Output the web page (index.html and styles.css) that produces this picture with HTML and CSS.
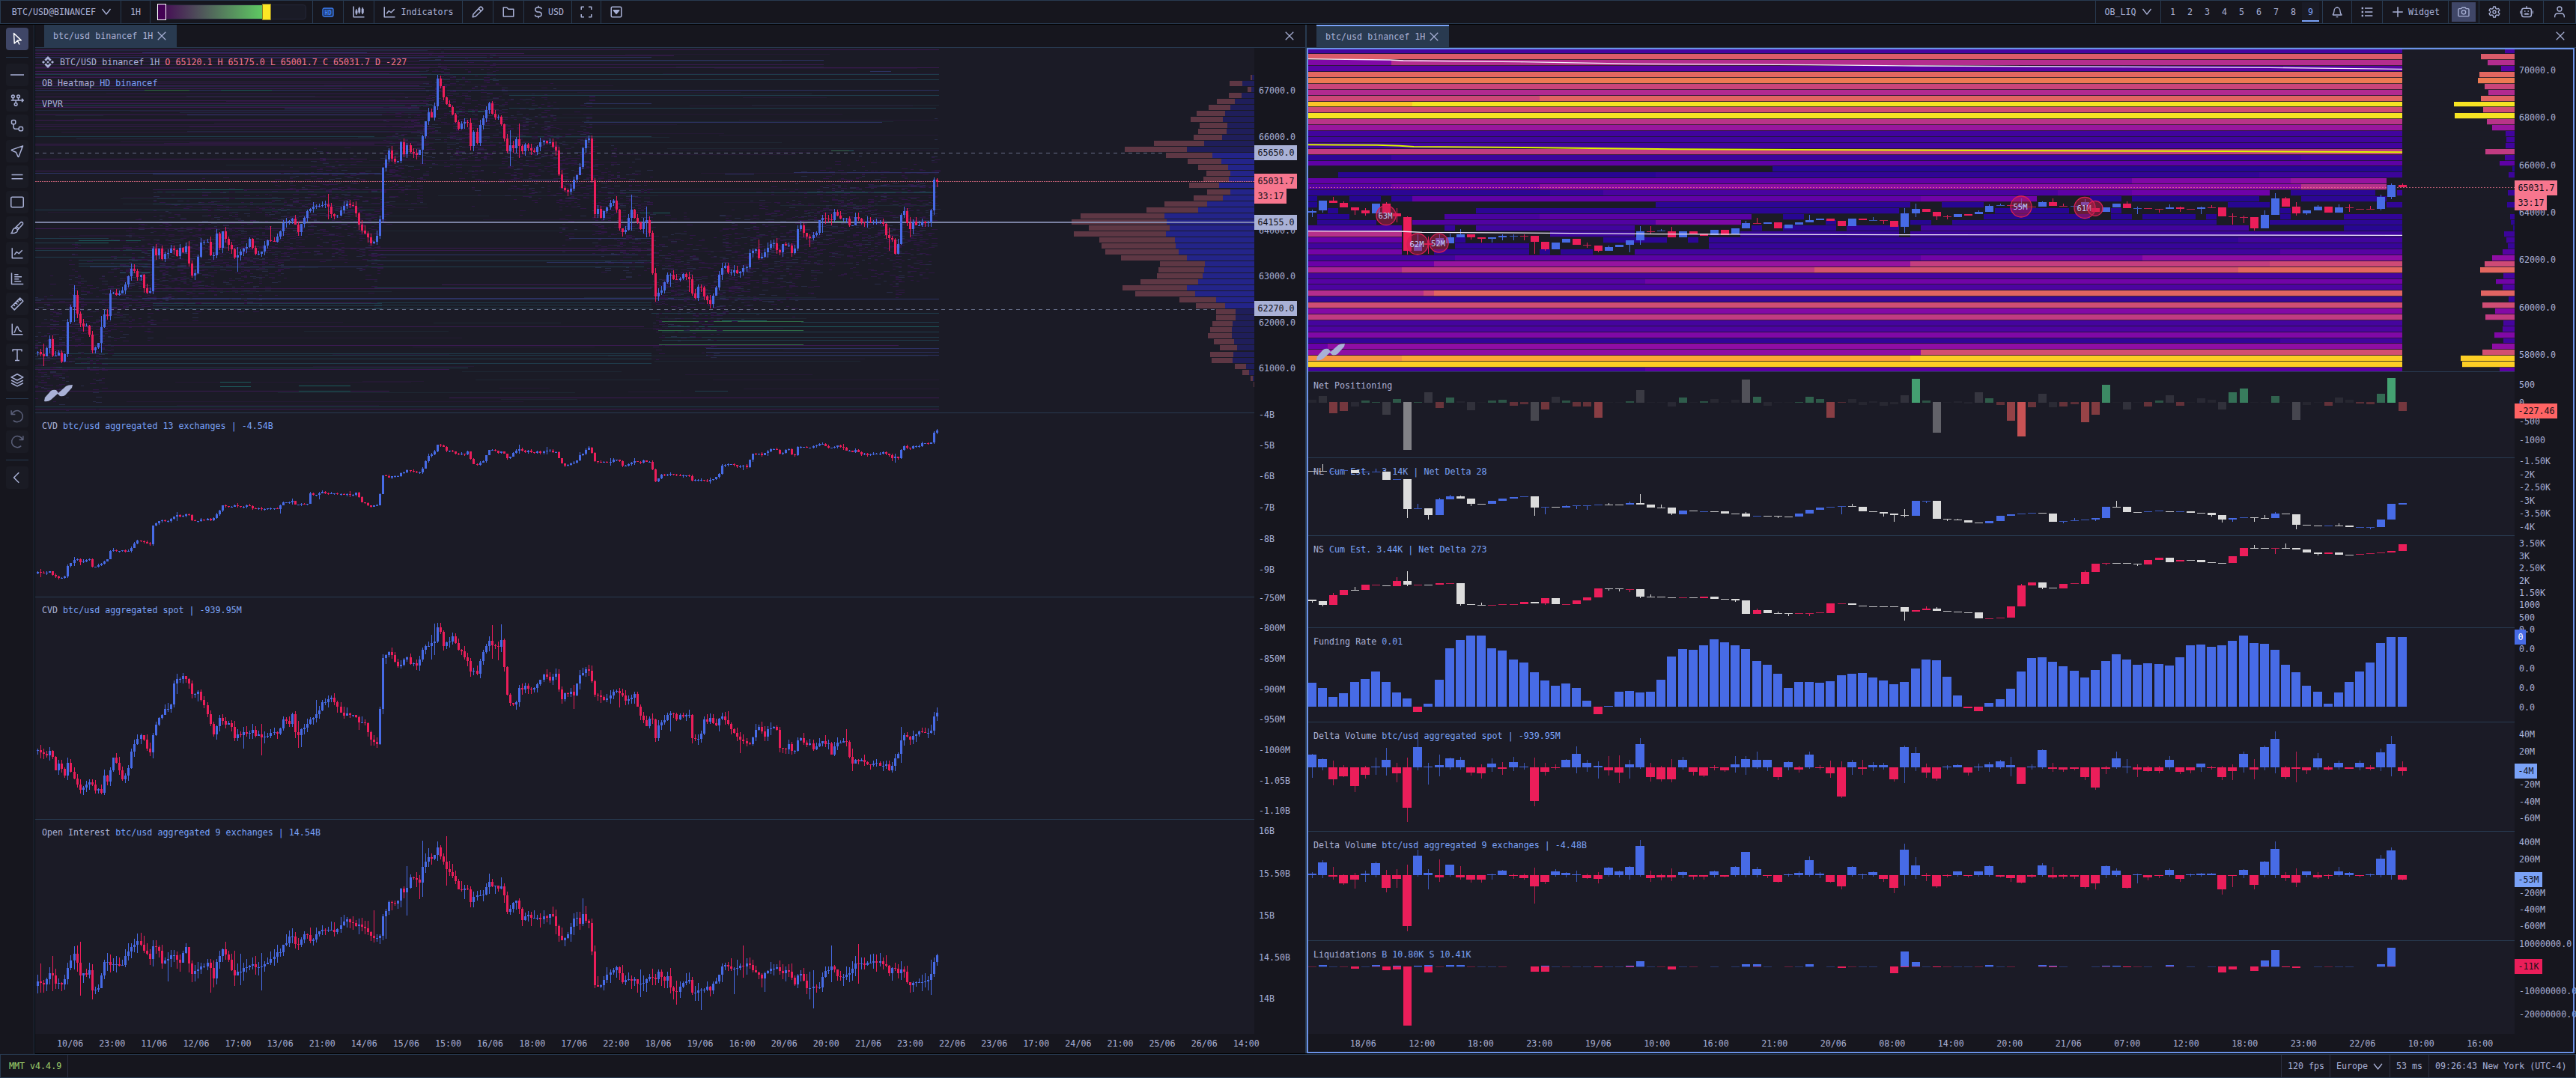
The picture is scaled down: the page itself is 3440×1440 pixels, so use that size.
FILE: index.html
```html
<!DOCTYPE html>
<html lang="en">
<head>
    <meta charset="utf-8">
    <title>MMT - BTC/USD</title>
    <link rel="stylesheet" href="styles.css">
</head>
<body>
    <svg class="sprite" width="0" height="0">
        <symbol id="i-down" viewBox="0 0 24 24"><path d="M1 4l11 14L23 4"/></symbol>
        <symbol id="i-left" viewBox="0 0 24 24"><path d="M15 3l-9 9 9 9"/></symbol>
        <symbol id="i-x" viewBox="0 0 24 24"><path d="M3 3l18 18M21 3L3 21"/></symbol>
        <symbol id="i-plus" viewBox="0 0 24 24"><path d="M12 3v18M3 12h18"/></symbol>
        <symbol id="i-candles" viewBox="0 0 24 24"><path d="M3 2v19h19M8 7v10M7 10h2v4H7zM13 3v12M12 6h2v6h-2zM19 4v12M18 7h2v6h-2z"/></symbol>
        <symbol id="i-chart" viewBox="0 0 24 24"><path d="M3 3v18h19M7 15l4-5 4 3 6-6"/></symbol>
        <symbol id="i-pencil" viewBox="0 0 24 24"><path d="M3 21l1-5L16 3.500a2.200 2.200 0 0 1 3 0l1.500 1.500a2.200 2.200 0 0 1 0 3L8 20zM13.500 6l4.500 4.500"/></symbol>
        <symbol id="i-folder" viewBox="0 0 24 24"><path d="M3 4h6l3 3h9v13H3z"/></symbol>
        <symbol id="i-dollar" viewBox="0 0 24 24"><path d="M17.500 7c0-2-2-3-4-3h-3C8 4 6.500 5.500 6.500 8s2 3.500 4 4h3c2.500.500 4 1.500 4 4s-2 4-4.500 4h-3c-2 0-4-1-4-3M12 1v3M12 20v3"/></symbol>
        <symbol id="i-full" viewBox="0 0 24 24"><path d="M3 8V3h5M16 3h5v5M21 16v5h-5M8 21H3v-5"/></symbol>
        <symbol id="i-box" viewBox="0 0 24 24"><rect x="3" y="3" width="18" height="18" rx="2"/><path d="M7 9h10l-5 6z" fill="currentColor"/></symbol>
        <symbol id="i-bell" viewBox="0 0 24 24"><path d="M3 18h18c-2-2-3-4-3-8a6 7 0 0 0-12 0c0 4-1 6-3 8M10 22h4M12 3V1.500"/></symbol>
        <symbol id="i-list" viewBox="0 0 24 24"><path d="M7.500 4.500H23M7.500 12H23M7.500 19.500H23"/><path d="M1 4.500h3.500M1 12h3.500M1 19.500h3.500" stroke-width="3.500"/></symbol>
        <symbol id="i-camera" viewBox="0 0 24 24"><path d="M3 5.500h4L9 3h6l2 2.500h4a1.500 1.500 0 0 1 1.500 1.500v12a1.500 1.500 0 0 1-1.500 1.500H3A1.500 1.500 0 0 1 1.500 19V7A1.500 1.500 0 0 1 3 5.500z"/><circle cx="12" cy="12.500" r="4"/></symbol>
        <symbol id="i-gear" viewBox="0 0 24 24"><path d="M10 1.500h4l.800 3.500 2.200 1.200 3.500-1 2 3.500-2.500 2.300v2l2.500 2.300-2 3.500-3.500-1L14.800 19l-.800 3.500h-4L9.200 19 7 17.800l-3.500 1-2-3.500L4 13v-2L1.500 8.700l2-3.500 3.500 1L9.200 5z"/><circle cx="12" cy="12" r="3"/></symbol>
        <symbol id="i-bot" viewBox="0 0 24 24"><rect x="3.500" y="5.500" width="17" height="15" rx="3.500"/><path d="M12 5V1.500M.500 10v5M23.500 10v5M7.500 15.500h9M8 10.500h2M14 10.500h2M10.500 14v3M13.500 14v3"/></symbol>
        <symbol id="i-user" viewBox="0 0 24 24"><circle cx="12" cy="6" r="4.500"/><path d="M2.500 23v-2c0-4 3-6 6-6h7c3 0 6 2 6 6v2"/></symbol>
        <symbol id="i-pointer" viewBox="0 0 24 24"><path d="M6 2l13 12.500-6 .200L7 20zM12 14l4 8"/></symbol>
        <symbol id="i-line" viewBox="0 0 24 24"><path d="M0 12h24"/></symbol>
        <symbol id="i-nodes" viewBox="0 0 24 24"><circle cx="4.500" cy="5" r="2.500"/><circle cx="14" cy="5" r="2.500"/><circle cx="9.500" cy="19" r="2.500"/><path d="M1 12h21M4.500 8v4M14 8v4M9.500 12v4M20 9l3 3-3 3"/></symbol>
        <symbol id="i-path" viewBox="0 0 24 24"><rect x="2" y="2" width="7" height="7" rx="2"/><rect x="15" y="14" width="7" height="7" rx="2"/><path d="M5.500 9v5c0 2 1 3.500 3 3.500H15"/></symbol>
        <symbol id="i-send" viewBox="0 0 24 24"><path d="M22 2.500L14.500 22h-1L10 14l-8-3.500v-1z"/></symbol>
        <symbol id="i-equal" viewBox="0 0 24 24"><path d="M2 8.500h20M2 15.500h20"/></symbol>
        <symbol id="i-rect" viewBox="0 0 24 24"><rect x="1" y="3" width="22" height="18" rx="2"/></symbol>
        <symbol id="i-brush" viewBox="0 0 24 24"><path d="M1 22c3 0 1-4 4-7a4 4 0 1 1 4 6c-2 1.500-6 1-8 1zM7.500 13.500L18 3c2-2 5 0 4 3L12 17M11 10l4 4"/></symbol>
        <symbol id="i-bars" viewBox="0 0 24 24"><path d="M2 2v20h21M7 5h7M7 9h13M7 13h8M7 17h12"/></symbol>
        <symbol id="i-ruler" viewBox="0 0 24 24"><path d="M1.500 17L17 1.500 22.500 7 7 22.500zM5.500 13l2.500 2.500M9 9.500l3.500 3.500M12 6.500L14.500 9M15 3.500l3 3"/></symbol>
        <symbol id="i-peak" viewBox="0 0 24 24"><path d="M3 2v19h19M6 18c3-1 3-10 6-11 2 0 2 5 4 7l4 2"/></symbol>
        <symbol id="i-text" viewBox="0 0 24 24"><path d="M4 6V2.500h16V6M12 3v19M8 22h8"/></symbol>
        <symbol id="i-stack" viewBox="0 0 24 24"><path d="M12 1L1.500 6.500 12 12l10.500-5.500zM1.500 12L12 17.500 22.500 12M1.500 17L12 22.500 22.500 17"/></symbol>
        <symbol id="i-undo" viewBox="0 0 24 24"><path d="M1.500 1.500v7h7M2.500 8.500A10 10 0 1 1 5 19.500"/></symbol>
        <symbol id="i-redo" viewBox="0 0 24 24"><path d="M22.500 1.500v7h-7M21.500 8.500A10 10 0 1 0 19 19.500"/></symbol>
        <symbol id="i-binance" viewBox="0 0 24 24"><path class="solid" d="M12 0l7 7-3 3-4-4-4 4-3-3zM12 24l7-7-3-3-4 4-4-4-3 3zM3 9l3 3-3 3-3-3zM21 9l3 3-3 3-3-3zM12 9.500l2.500 2.500-2.500 2.500L9.500 12z"/></symbol>
    </svg>

    <header class="topbar">
        <div class="cell symbol">BTC/USD@BINANCEF<svg class="icon chev"><use href="#i-down"/></svg></div>
        <div class="cell interval">1H</div>
        <div class="cell range"><div class="slider"><span class="fill"></span><span class="handle low"></span><span class="handle high"></span></div></div>
        <div class="cell w41"><svg class="hd" viewBox="0 0 16 13"><rect x="1" y="1" width="14" height="11" rx="2"/><text x="8" y="9.500">HD</text></svg></div>
        <div class="cell w41"><svg class="icon"><use href="#i-candles"/></svg></div>
        <div class="cell indicators"><svg class="icon"><use href="#i-chart"/></svg>Indicators</div>
        <div class="cell w41"><svg class="icon"><use href="#i-pencil"/></svg></div>
        <div class="cell w41"><svg class="icon"><use href="#i-folder"/></svg></div>
        <div class="cell currency"><svg class="icon"><use href="#i-dollar"/></svg>USD</div>
        <div class="cell w39"><svg class="icon"><use href="#i-full"/></svg></div>
        <div class="cell w39 last"><svg class="icon"><use href="#i-box"/></svg></div>
        <div class="spacer"></div>
        <div class="cell layout">OB_LIQ<svg class="icon chev"><use href="#i-down"/></svg></div>
        <div class="cell pages"><span>1</span><span>2</span><span>3</span><span>4</span><span>5</span><span>6</span><span>7</span><span>8</span><span class="current">9</span></div>
        <div class="cell w39"><svg class="icon small"><use href="#i-bell"/></svg></div>
        <div class="cell w41"><svg class="icon small"><use href="#i-list"/></svg></div>
        <div class="cell widget"><svg class="icon"><use href="#i-plus"/></svg>Widget</div>
        <div class="cell w41"><span class="pressed"><svg class="icon small"><use href="#i-camera"/></svg></span></div>
        <div class="cell w41"><svg class="icon small"><use href="#i-gear"/></svg></div>
        <div class="cell w45"><svg class="icon"><use href="#i-bot"/></svg></div>
        <div class="cell w42"><svg class="icon small"><use href="#i-user"/></svg></div>
    </header>

    <main class="workspace">
        <nav class="tools">
            <button class="tool active"><svg class="icon"><use href="#i-pointer"/></svg></button>
            <hr>
            <button class="tool"><svg class="icon"><use href="#i-line"/></svg></button>
            <button class="tool"><svg class="icon"><use href="#i-nodes"/></svg></button>
            <button class="tool"><svg class="icon"><use href="#i-path"/></svg></button>
            <button class="tool"><svg class="icon"><use href="#i-send"/></svg></button>
            <button class="tool"><svg class="icon"><use href="#i-equal"/></svg></button>
            <button class="tool"><svg class="icon"><use href="#i-rect"/></svg></button>
            <button class="tool"><svg class="icon"><use href="#i-brush"/></svg></button>
            <button class="tool"><svg class="icon"><use href="#i-chart"/></svg></button>
            <button class="tool"><svg class="icon"><use href="#i-bars"/></svg></button>
            <button class="tool"><svg class="icon"><use href="#i-ruler"/></svg></button>
            <button class="tool"><svg class="icon"><use href="#i-peak"/></svg></button>
            <button class="tool"><svg class="icon"><use href="#i-text"/></svg></button>
            <button class="tool"><svg class="icon"><use href="#i-stack"/></svg></button>
            <hr>
            <button class="tool off"><svg class="icon"><use href="#i-undo"/></svg></button>
            <button class="tool off"><svg class="icon"><use href="#i-redo"/></svg></button>
            <hr>
            <button class="tool"><svg class="icon"><use href="#i-left"/></svg></button>
        </nav>

        <section class="panel left">
            <div class="tabs">
                <div class="tab">btc/usd binancef 1H<svg class="icon"><use href="#i-x"/></svg></div>
                <svg class="icon close"><use href="#i-x"/></svg>
            </div>
            <div class="body">
                <div class="plots">
                    <div class="pane l-price">
                        <svg class="plot" id="price"></svg>
                        <div class="legend">
                            <p><svg class="icon coin"><use href="#i-binance"/></svg>BTC/USD binancef 1H <em>O 65120.1 H 65175.0 L 65001.7 C 65031.7 D -227</em></p>
                            <p>OB Heatmap <b>HD binancef</b></p>
                            <p>VPVR</p>
                        </div>
                    </div>
                    <div class="pane l-cvd"><svg class="plot" id="cvd"></svg><div class="legend"><p>CVD <b>btc/usd aggregated 13 exchanges | -4.54B</b></p></div></div>
                    <div class="pane l-spot"><svg class="plot" id="cvdspot"></svg><div class="legend"><p>CVD <b>btc/usd aggregated spot | -939.95M</b></p></div></div>
                    <div class="pane l-oi"><svg class="plot" id="oi"></svg><div class="legend"><p>Open Interest <b>btc/usd aggregated 9 exchanges | 14.54B</b></p></div></div>
                </div>
                <svg class="axis" id="axisleft"></svg>
            </div>
            <div class="times" id="timesleft"></div>
        </section>

        <section class="panel right">
            <div class="tabs">
                <div class="tab">btc/usd binancef 1H<svg class="icon"><use href="#i-x"/></svg></div>
                <svg class="icon close"><use href="#i-x"/></svg>
            </div>
            <div class="focus">
                <div class="body">
                    <div class="plots">
                        <div class="pane r-liq"><svg class="plot" id="liqmap"></svg></div>
                        <div class="pane r-np"><div class="legend"><p>Net Positioning</p></div><svg class="plot" id="np"></svg></div>
                        <div class="pane r-nl"><div class="legend"><p>NL <b>Cum Est. -3.14K | Net Delta 28</b></p></div><svg class="plot" id="nl"></svg></div>
                        <div class="pane r-ns"><div class="legend"><p>NS <b>Cum Est. 3.44K | Net Delta 273</b></p></div><svg class="plot" id="ns"></svg></div>
                        <div class="pane r-fund"><div class="legend"><p>Funding Rate <b>0.01</b></p></div><svg class="plot" id="funding"></svg></div>
                        <div class="pane r-dv"><div class="legend"><p>Delta Volume <b>btc/usd aggregated spot | -939.95M</b></p></div><svg class="plot" id="dvspot"></svg></div>
                        <div class="pane r-dv"><div class="legend"><p>Delta Volume <b>btc/usd aggregated 9 exchanges | -4.48B</b></p></div><svg class="plot" id="dv"></svg></div>
                        <div class="pane r-liqs"><div class="legend"><p>Liquidations <b>B 10.80K S 10.41K</b></p></div><svg class="plot" id="liqs"></svg></div>
                    </div>
                    <svg class="axis" id="axisright"></svg>
                </div>
                <div class="times" id="timesright"></div>
            </div>
        </section>
    </main>

    <footer class="statusbar">
        <span class="version">MMT v4.4.9</span>
        <span class="spacer"></span>
        <span class="stat fps">120 fps</span>
        <span class="stat region">Europe <svg class="icon chev"><use href="#i-down"/></svg></span>
        <span class="stat ping">53 ms</span>
        <span class="stat clock">09:26:43 New York (UTC-4)</span>
    </footer>

    <script src="charts.js"></script>
</body>
</html>
```

FILE: styles.css
```css
* {
    box-sizing: border-box;
}
body {
    margin: 0;
    width: 100vw;
    height: 100vh;
    overflow: hidden;
    display: flex;
    flex-direction: column;
    background: #000;
    color: #a9b1d6;
    font-family: "DejaVu Sans Mono", monospace;
    font-size: 11.66px;
    white-space: nowrap;
}
.sprite {
    position: absolute;
}
.icon {
    width: 18px;
    height: 18px;
    flex: none;
    fill: none;
    stroke: currentColor;
    stroke-width: 2;
    stroke-linejoin: round;
}
.icon.small {
    width: 16px;
    height: 16px;
}
.solid {
    fill: currentColor;
    stroke: none;
}
.spacer {
    flex: 1;
}

/* top bar */
.topbar {
    height: 32px;
    margin-bottom: 1px;
    flex: none;
    display: flex;
    background: #16161e;
    border: 1px solid #283a50;
}
.cell {
    display: flex;
    align-items: center;
    justify-content: center;
    border-right: 1px solid #283a50;
}
.cell.last {
    border-right: 0;
}
.icon.chev {
    width: 14px;
    height: 12px;
    stroke-width: 2.6;
    overflow: visible;
}
.symbol {
    width: 161px;
    padding-left: 3px;
    gap: 7px;
}
.interval {
    width: 39px;
}
.range {
    width: 217px;
}
.w39 {
    width: 39px;
}
.w41 {
    width: 41px;
}
.w42 {
    width: 42px;
    border-right: 0;
}
.w45 {
    width: 45px;
}
.indicators {
    width: 118px;
    gap: 6px;
}
.currency {
    width: 64px;
    gap: 4px;
}
.layout {
    width: 88px;
    gap: 7px;
    border-left: 1px solid #283a50;
}
.widget {
    width: 88px;
    gap: 5px;
}
.pages {
    width: 216px;
}
.pages span {
    width: 23px;
    height: 26px;
    line-height: 27px;
    text-align: center;
}
.pages .current {
    background: #1a1b26;
    color: #7aa2f7;
    box-shadow: inset 0 -2px #7aa2f7;
}
.pressed {
    width: 32px;
    height: 26px;
    display: flex;
    align-items: center;
    justify-content: center;
    background: #3f4667;
}
.slider {
    width: 200px;
    height: 20px;
    display: flex;
    align-items: center;
    border: 1px solid #232638;
    border-radius: 4px;
    background: #1a1b26;
}
.slider .fill {
    width: 140px;
    height: 18px;
    background: linear-gradient(90deg, #440154, #5ec962);
}
.slider .handle {
    width: 12px;
    height: 22px;
    border: 1px solid #fff;
    background: #440154;
}
.slider .low {
    margin-left: -140px;
}
.slider .high {
    margin-left: 128px;
    border: 1px solid #8c7d20;
    background: #fde725;
}
.hd {
    width: 16px;
    height: 13px;
    fill: #1c335f;
    stroke: #3d7ff5;
    stroke-width: 1.3;
}
.hd text {
    fill: #3d7ff5;
    stroke: none;
    font-size: 8px;
    font-weight: bold;
    text-anchor: middle;
}

/* drawing tools */
.workspace {
    flex: 1;
    min-height: 0;
    display: flex;
}
.tools {
    width: 46px;
    margin-right: 1px;
    padding: 4px 7px 0 8px;
    background: #16161e;
    border-right: 1px solid #283a50;
}
.tool {
    width: 30px;
    height: 30px;
    margin: 0 0 4px;
    padding: 0;
    display: flex;
    align-items: center;
    justify-content: center;
    border: 0;
    border-radius: 4px;
    background: #1a1b24;
    color: #a9b1d6;
}
.tool.active {
    background: #3f4667;
    color: #fff;
}
.tool.off {
    color: #5b607a;
}
.tools hr {
    margin: 9px 0 8px;
    border: 0;
    height: 1px;
    background: #283a50;
}

/* panels */
.panel {
    display: flex;
    flex-direction: column;
    background: #16161e;
    margin-bottom: 1px;
}
.panel.left {
    width: 1696px;
}
.panel.right {
    flex: 1;
    border-left: 2px solid #283a50;
}
.tabs {
    height: 31px;
    flex: none;
    display: flex;
    align-items: center;
    justify-content: space-between;
    padding: 0 14px 0 12px;
    border-bottom: 1px solid #283a50;
}
.tab {
    width: 177px;
    height: 30px;
    padding: 0 0 0 12px;
    display: flex;
    align-items: center;
    gap: 5px;
    background: #293a50;
}
.tab .icon {
    width: 14px;
    height: 14px;
}
.close {
    width: 14px;
    height: 14px;
}
.right .tab {
    border-top: 2px solid #7aa2f7;
}
.right .tabs {
    padding-left: 13px;
}
.left .body {
    height: 1317px;
    display: grid;
    grid-template-columns: 1628px 68px;
}
.focus {
    position: relative;
    flex: 1;
    margin: 0 2px 1px 0;
}
.focus::after {
    content: "";
    position: absolute;
    inset: 0;
    border: 2px solid #6c93e8;
}
.right .body {
    height: 1317px;
    display: grid;
    grid-template-columns: 1613px 1fr;
}
.plots {
    display: flex;
    flex-direction: column;
    background: #1b1b26;
}
.pane {
    display: grid;
    border-bottom: 1px solid #283a50;
}
.pane:last-child {
    border-bottom: 0;
}
.plot, .legend {
    grid-area: 1 / 1;
    min-width: 0;
    min-height: 0;
}
.plot, .axis {
    display: block;
    width: 100%;
    height: 100%;
    shape-rendering: crispEdges;
}
.legend {
    padding: 3px 9px;
}
.l-price .legend {
    padding-top: 5px;
}
.right .legend {
    padding: 4px 9px;
}
.legend p {
    margin: 0;
    height: 28px;
    line-height: 28px;
    display: flex;
    align-items: center;
    white-space: pre;
}
.legend b {
    color: #7aa2f7;
    font-weight: normal;
}
.legend em {
    color: #f7768e;
    font-style: normal;
}
.icon.coin {
    width: 16px;
    height: 16px;
    margin-right: 8px;
}
.l-price { height: 488px; }
.l-cvd { height: 246px; }
.l-spot { height: 297px; }
.l-oi { height: 286px; }
.r-liq { height: 433px; }
.r-np { height: 115px; }
.r-nl { height: 104px; }
.r-ns { height: 123px; }
.r-fund { height: 126px; }
.r-dv { height: 146px; }
.r-liqs { height: 124px; }

.plot text {
    fill: #c0caf5;
    text-anchor: middle;
    font-size: 10.5px;
}
.axis {
    overflow: visible;
}
.axis text {
    fill: #a9b1d6;
}
.times {
    height: 26px;
    display: flex;
    align-items: center;
}
.times span {
    flex: none;
    text-align: center;
}
.left .times {
    padding-left: 18.6px;
}
.left .times span {
    width: 56.1px;
}
.right .times {
    padding-left: 36px;
}
.right .times span {
    width: 78.5px;
}

/* status bar */
.statusbar {
    height: 32px;
    flex: none;
    display: flex;
    line-height: 31px;
    background: #16161e;
    border: 1px solid #283a50;
}
.version {
    width: 90px;
    padding-left: 11px;
    color: #9ece6a;
    border-right: 1px solid #2b2e40;
}
.stat {
    padding-left: 8px;
    border-left: 1px solid #2b2e40;
}
.stat .chev {
    width: 13px;
    vertical-align: middle;
}
.fps { width: 65px; }
.region { width: 80px; }
.ping { width: 52px; }
.clock { width: 196px; }
```

FILE: charts.js
```js
// Chart geometry is kept in window pixels; every svg maps its viewBox onto its own place in the window.
const BLUE = '#476be6', RED = '#eb1e5a', WHITE = '#dcdcdc';
const DIM = { b: '#3a58bb', r: '#c01f50', w: '#c4c4c6' };
const FULL = { b: BLUE, r: RED, w: WHITE };

let seed = 7;
function rnd() {
    seed = (seed * 1664525 + 1013904223) % 4294967296;
    return seed / 4294967296;
}

function Layer(id) {
    const svg = document.getElementById(id);
    const box = svg.getBoundingClientRect();
    svg.setAttribute('viewBox', [box.left, box.top, box.width, box.height].join(' '));
    let out = '';
    return {
        rect(x, y, w, h, fill) { out += `<path fill="${fill}" d="M${x.toFixed(1)} ${y.toFixed(1)}h${w.toFixed(1)}v${h.toFixed(1)}h${(-w).toFixed(1)}z"/>`; },
        raw(s) { out += s; },
        done() { svg.innerHTML = out; }
    };
}

function points(s) {
    return s.trim().split(/\s+/).map(p => p.split(',').map(Number));
}

function at(path, x) {
    if (x <= path[0][0]) return path[0][1];
    for (let i = 1; i < path.length; i++) {
        const a = path[i - 1], b = path[i];
        if (x <= b[0]) return a[1] + (b[1] - a[1]) * (x - a[0]) / (b[0] - a[0]);
    }
    return path[path.length - 1][1];
}

function candle(layer, x, top, bottom, hi, lo, kind, w) {
    if (hi < top) layer.rect(x - .5, hi, 1, top - hi, FULL[kind]);
    if (lo > bottom) layer.rect(x - .5, bottom, 1, lo - bottom, FULL[kind]);
    layer.rect(x - w / 2, top, w, Math.max(1, bottom - top), bottom - top <= 1 ? DIM[kind] : FULL[kind]);
}

function series(id, path, jitter, wick) {
    const layer = Layer(id);
    let open = path[0][1] + 4;
    return { layer, draw() {
        for (let i = 0; i < 298; i++) {
            const x = Math.round(50 + i * 4.045) + .5;
            const close = Math.round(at(path, x) + (rnd() - .5) * jitter);
            const top = Math.min(open, close), bottom = Math.max(open, close);
            const long = rnd() > .9 ? 3 : 1;
            candle(layer, x, top, Math.max(top + 1.1, bottom), top - rnd() * wick * long, bottom + rnd() * wick * long, close <= open ? 'b' : 'r', 3);
            open = close;
        }
        layer.done();
    } };
}

const pricePath = points(`49,467 53,474 59,475 67,451 71,477 79,469 84,491 88,459 91,422 99,392 103,418 110,438 118,435
122,471 131,461 139,420 144,423 148,389 157,393 165,385 176,360 184,369 188,365 192,385 200,396 204,330 208,341 212,332
216,345 229,331 237,342 241,331 245,337 249,326 252,348 256,370 261,364 265,339 268,323 278,322 284,355 289,308 293,333
297,309 304,322 313,342 329,332 333,318 341,338 349,338 358,318 367,323 378,300 391,290 398,310 406,290 413,279 422,277
431,273 439,277 443,288 451,290 463,271 473,277 476,288 482,308 490,312 495,324 502,320 507,308 510,227 514,220 519,201
524,214 531,218 535,188 539,206 543,192 551,206 559,209 563,189 571,149 576,157 580,148 584,105 588,114 592,131 598,140
604,152 612,171 619,165 625,163 629,200 633,174 637,194 643,157 648,161 652,128 656,153 668,158 673,182 677,205 680,193
685,199 689,186 696,203 701,193 707,198 715,203 721,188 734,191 743,203 745,213 748,251 761,259 765,244 769,229 773,239
777,200 781,193 786,178 789,214 793,289 798,280 803,291 809,277 821,265 825,290 829,315 837,303 842,277 848,290 857,309
862,285 866,308 870,319 873,409 877,388 882,393 888,375 894,363 901,377 912,368 920,369 922,383 927,403 934,376 939,393
948,407 954,393 958,380 963,357 970,356 974,371 979,358 987,367 991,354 995,364 999,350 1002,336 1010,334 1015,349
1022,337 1030,324 1036,329 1040,343 1044,324 1055,328 1060,345 1064,310 1068,297 1076,317 1080,320 1090,312 1096,291
1110,293 1116,281 1121,292 1129,290 1136,306 1144,285 1149,297 1161,298 1170,298 1179,295 1184,317 1193,320 1197,350
1201,314 1205,270 1210,292 1214,310 1221,292 1225,308 1229,294 1241,299 1245,267 1248,236 1252,242`);

const cvdPath = points(`50,762 55,765 68,764 75,772 83,771 85,774 91,755 99,747 110,750 121,746 124,759 137,752 145,747
148,735 174,736 181,722 195,724 201,728 204,702 212,697 224,695 232,690 253,687 257,696 286,693 292,683 297,676 332,676
342,680 373,678 377,672 392,669 395,674 411,674 414,661 435,658 448,661 477,659 483,671 496,676 506,674 510,634 518,637
531,635 543,629 562,631 567,619 572,608 580,604 584,593 597,601 613,608 626,604 630,620 640,621 647,613 652,601 672,604
678,613 692,601 709,604 742,603 748,617 754,622 767,619 779,604 788,597 793,615 808,618 825,613 832,623 846,618 866,615
871,622 874,644 883,635 900,634 920,636 925,642 949,642 960,635 963,620 999,623 1003,606 1020,607 1031,599 1043,605
1053,601 1061,611 1065,596 1078,598 1095,593 1111,598 1119,594 1136,604 1144,601 1151,607 1182,604 1190,610 1201,611
1205,594 1215,598 1227,595 1231,592 1244,592 1249,574 1253,575`);

const spotPath = points(`50,999 60,1008 68,1006 75,1027 80,1017 85,1040 91,1017 99,1042 108,1058 123,1040 124,1057
137,1058 139,1036 145,1043 152,1008 159,1026 164,1043 172,1022 178,997 188,979 195,997 201,1008 206,972 214,958 228,942
233,908 249,904 257,926 265,924 274,945 282,965 287,985 292,956 307,970 315,985 336,977 351,988 361,979 373,979 377,963
386,969 392,951 395,981 408,972 415,960 424,956 427,944 444,931 453,954 473,954 481,970 489,965 495,988 506,992 510,881
521,872 531,892 543,881 555,892 564,872 570,861 582,860 586,826 591,867 605,850 611,869 623,877 628,895 638,897 644,872
652,858 663,863 671,858 673,883 676,924 684,944 691,936 694,917 705,920 717,915 725,901 734,911 744,901 749,936 756,927
767,927 771,908 783,897 789,894 793,929 808,933 827,922 835,938 846,926 854,951 862,969 871,954 875,985 880,967 895,952
904,961 920,952 923,983 935,988 939,963 949,961 958,972 963,952 974,972 987,986 999,997 1005,983 1013,972 1021,983
1030,970 1038,974 1041,1001 1054,997 1061,1008 1068,981 1076,995 1090,999 1104,990 1111,1006 1119,990 1132,993
1137,1022 1148,1013 1161,1020 1179,1020 1190,1029 1198,1011 1205,981 1215,988 1227,979 1244,976 1249,949 1253,952`);

const oiPath = points(`50,1313 58,1315 68,1300 75,1313 85,1317 91,1288 99,1273 108,1303 121,1298 124,1327 133,1317
139,1287 166,1290 168,1273 184,1257 195,1272 201,1279 205,1260 212,1268 217,1288 232,1273 240,1285 249,1263 255,1305
269,1290 278,1287 286,1307 290,1283 298,1268 307,1287 313,1303 332,1287 344,1293 361,1282 373,1272 390,1247 395,1265
408,1247 415,1260 429,1242 448,1243 463,1230 477,1235 489,1242 497,1253 507,1253 511,1227 519,1207 531,1206 536,1183
541,1193 547,1171 560,1179 565,1158 571,1143 578,1146 585,1129 590,1147 599,1163 608,1175 612,1191 624,1186 629,1209
633,1197 647,1193 653,1177 663,1187 669,1182 673,1193 677,1217 690,1203 697,1228 705,1224 717,1227 738,1223 744,1243
750,1258 760,1247 767,1223 774,1233 778,1218 784,1231 788,1232 790,1263 794,1315 804,1317 810,1303 823,1292 832,1312
842,1307 858,1315 871,1303 874,1310 879,1297 886,1310 891,1303 894,1319 902,1325 912,1313 920,1307 925,1328 937,1320
949,1321 959,1305 964,1290 972,1288 978,1293 999,1289 1007,1297 1017,1307 1024,1296 1036,1292 1041,1298 1053,1298
1061,1315 1068,1297 1076,1318 1095,1318 1099,1303 1111,1292 1121,1306 1136,1300 1143,1285 1157,1289 1165,1285
1182,1287 1186,1300 1194,1292 1200,1303 1205,1289 1213,1316 1223,1310 1241,1311 1245,1295 1250,1278 1254,1275`);

// order book heatmap: resting levels as x0,x1,y
const levels = {
    '#3a1b50': `47,1254,66 47,700,71 47,900,74 47,1254,90 47,560,95 47,520,98 47,570,103 47,575,109 47,560,114 47,568,118
        47,575,129 47,580,134 47,572,138 47,560,143 47,560,160 47,575,168 47,500,192 47,490,212 47,400,228 47,510,231
        204,560,253 47,400,305 47,870,331 500,870,334 590,873,380 204,870,385 47,870,404 47,860,436 47,672,436 47,1200,461
        47,600,493 47,520,522 47,1254,546 600,1254,531 1040,1254,106 47,1100,86`,
    '#2c3262': `190,490,70 47,870,76 560,1100,80 47,1254,120 780,870,138 780,1178,163 47,510,231 204,510,232 680,745,240
        968,1007,232 1162,1190,95 760,872,318 500,870,340 730,870,350 190,900,398 120,630,356 943,1254,465 943,1254,470
        943,1254,474 250,510,153 380,560,145 1060,1254,230 1160,1254,248 47,1254,399`,
    '#1f3c4b': `47,1254,99 590,1254,106 680,1254,127 47,580,140 680,1250,144 47,500,182 210,510,256 210,380,265 204,380,272
        47,510,280 47,145,318 47,145,324 47,204,334 47,204,343 105,204,347 105,200,352 105,200,355 204,510,405 204,510,408
        204,510,412 500,870,404 500,870,407 500,870,411 500,870,384 490,870,348 490,860,356 47,870,472 150,870,474
        47,870,479 100,870,485 47,625,491 47,1254,543 673,870,182 810,1250,257 870,1254,418 884,1254,443 884,1254,450
        884,1254,454 1070,1254,430 928,972,522 640,650,148 1066,1250,256`,
    '#1c5a5c': `193,253,120 295,363,120 250,325,253 100,145,324 105,188,321 884,1254,436 964,1024,428
        294,335,510 294,335,516 399,468,515 399,468,522 855,895,284 1110,1140,201 600,650,148 160,200,364`,
    '#2f6b45': `193,253,120 879,1073,441 880,1073,429 880,1073,460 1110,1134,201 1097,1132,295`
};

function drawPrice() {
    const s = series('price', pricePath, 4, 7), g = s.layer;
    // faint background levels, thicker above the early range
    for (let i = 0; i < 130; i++) {
        const y = Math.round(65 + 480 * rnd());
        const x = 47 + rnd() * 1000;
        const p = at(pricePath, x);
        if (y > p + 40 && y < 430 && rnd() > .25) continue;
        g.rect(x, y, Math.min(60 + rnd() * 380, 1254 - x), 1, rnd() > .3 ? '#241a33' : '#1e2733');
    }
    for (let i = 0; i < 45; i++) {
        const x = 47 + (rnd() > .5 ? 0 : rnd() * 300);
        g.rect(x, Math.round(65 + 130 * rnd()), 560 - x + rnd() * 20, 1, rnd() > .2 ? '#2a1a3b' : '#22263f');
    }
    for (const color in levels) {
        points(levels[color]).forEach(l => {
            g.rect(l[0], l[2], l[1] - l[0], 1, color);
        });
    }
    // churn close to the market
    for (let i = 0; i < 5600; i++) {
        const x = 47 + Math.floor(rnd() * 298) * 4.045;
        const off = (rnd() + rnd() - 1) * 90;
        const y = Math.round(at(pricePath, x) + off);
        if (y < 65 || y > 548) continue;
        g.rect(x, y, 4 + Math.floor(rnd() * 2) * 4, 1, rnd() > .25 ? '#2e1744' : '#282b47');
    }
    g.raw('<path stroke="#656c87" stroke-dasharray="5 5" d="M47 204.500H1675M47 413.500H1675"/>');
    drawProfile(g);
    g.raw('<path stroke="#8b93b8" stroke-width="2" opacity=".85" d="M47 297H1675"/>');
    g.raw('<path stroke="#f7768e" stroke-dasharray="2 1" opacity=".75" d="M47 242.500H1675"/>');
    watermark(g, 59, 514);
    s.draw();
}

// volume profile rows: total width, buy width
const profile = points(`5,3 33,16 9,4 34,17 50,26 61,32 77,39 85,42 73,36 75,37 81,43 134,67 173,90 118,56 89,44 75,35 64,32
68,34 87,47 63,32 81,42 120,63 144,75 232,120 244,117 221,113 241,118 207,106 204,105 199,101 178,90 126,66 128,67 130,69
152,75 176,90 159,79 100,51 78,39 51,25 51,25 56,29 59,30 62,30 54,27 46,23 59,28 57,29 26,11 16,7 5,2 1,0`);

function drawProfile(g) {
    profile.forEach((p, i) => {
        const y = Math.round(99.8 + i * 8.037);
        const inArea = i > 12 && i < 39;
        g.rect(1675 - p[0], y, p[0] - p[1], 7, '#5e3744');
        g.rect(1675 - p[1], y, p[1], 7, inArea ? '#232489' : '#1f1e5a');
    });
}

function watermark(g, x, y) {
    g.raw(`<path transform="translate(${x} ${y})" fill="#a9b1d6" shape-rendering="auto" d="M0 22L1 17L9 8Q12 6 16 7L19 11L20 10L29 2Q32 0 38 0L37 4L28 14Q25 16 21 15L18 12L9 20Q5 23 0 22Z"/>`);
}

const plasma = ['0d0887', '41049d', '6a00a8', '8f0da4', 'b12a90', 'cc4778', 'e16462', 'f2844b', 'fca636', 'fcce25', 'f0f921']
    .map(h => [0, 2, 4].map(i => parseInt(h.slice(i, i + 2), 16)));

function heat(v) {
    const i = Math.min(9, Math.floor(v / 10)), t = v / 10 - i;
    return 'rgb(' + plasma[i].map((c, k) => Math.round(c + (plasma[i + 1][k] - c) * t)) + ')';
}

// liquidation map rows, top to bottom: start slot,level ... (level -1 is empty) | profile width
const liqRows = `0,11|13/0,57|45/0,26 8,41|36/0,16|18/0,61|47/0,67|49/0,49|40/0,40|35/0,50 22,60|45/0,88 10,95|81/0,52|42/0,95|80
/0,43|37/0,33|30/0,10|12/0,10|11/0,10|12/0,46|39/0,6 8,9 94,11|13/0,17|20/0,-1 44,5|3/0,-1 3,5 33,7 90,9|8
/0,18 78,26 93,32 102,-1|0/0,15 8,22 22,29 94,42 102,-1|0
/0,6 23,8 28,12 71,17 78,21 91,-1 93,6 101,-1 103,8|9
/0,4 1,-1 4,5 7,-1 8,6 10,18 58,22 69,-1 74,5 77,-1 78,5 90,-1 94,6 102,-1|0
/0,4 1,-1 33,6 57,-1 60,5 64,-1 87,5 91,-1 102,7|10
/0,-1 2,5 3,-1 16,6 56,-1 65,5 72,-1 76,6 77,-1 92,5 93,-1|0
/0,-1 1,5 4,-1 13,12 22,16 42,-1 45,5 47,-1 64,5 74,-1 76,5 78,-1 79,5 84,-1 85,5 86,-1 92,5 93,-1 98,7|6
/0,-1 1,6 6.6,-1 10,14 33,25 41,-1 49,5 50,-1 57,5 59,-1 61,6 86,-1 91,6|5
/0,11 9,-1 13,8 14,-1 16,10 31,-1 42,6 43,-1 45,6 50,-1 51,7 56,-1 58,10 89,-1 98,5|2
/0,42 9,-1 23,9 31,-1 41,8 56,-1 57,9|14/0,19 9,-1 14,6 15,-1 28,6 34,-1 36,6 37,-1 38,7 88,10|11/0,10 9,-1 14,7 21,-1 38,8|9
/0,23 9,-1 12,7 21,-1 22,5 23,-1 24,6 27,-1 31,10 92,15|16/0,10 14,16 58,22 79,30|30/0,20 12,32 57,47 91,51|40
/0,37 9,45 48,54 88,61|46/0,11|15/0,15 32,22|25/0,13|16/0,41 11,50 12,60|45/0,8|8/0,52|43/0,27|26/0,46|39/0,11|15/0,13|16
/0,26|27/0,7 92,10|15/0,20 2,30|30/0,30 58,53|43/0,74 9,80 57,90|72/0,90|70/0,11 32,17|20`;

function slotX(k) {
    return 1752 + k * 14.132;
}

function barCandles(g, data) {
    data.trim().split(/\s+/).forEach((t, k) => {
        const n = t.slice(1).split('-').map(Number);
        const hi = n.length > 2 ? n[2] : n[0], lo = n.length > 3 ? n[3] : n[1];
        candle(g, Math.round(slotX(k)) + .5, n[0], n[1], Math.min(hi, n[0]), Math.max(lo, n[1]), t[0], 11);
    });
}

function drawLiqMap() {
    const g = Layer('liqmap');
    liqRows.split('/').forEach((row, i) => {
        const parts = row.split('|'), segs = points(parts[0]), y = 64.4 + i * 7.9;
        let last = 0;
        segs.forEach((s, k) => {
            const x0 = k ? 1745 + s[0] * 14.132 : 1745;
            const x1 = k + 1 < segs.length ? 1745 + segs[k + 1][0] * 14.132 : 3208;
            if (s[1] < 0) return;
            g.rect(x0, y, x1 - x0, 7.9, heat(s[1]));
            last = s[1];
        });
        const w = Number(parts[1]);
        if (w) g.rect(3358 - w, y, w, 7.9, heat(last));
        g.raw(`<path fill="#1b1b26" opacity=".8" d="M1745 ${(y + 6.9).toFixed(1)}H3358v1H1745z"/>`);
    });
    g.raw('<path stroke="#f7768e" opacity=".7" stroke-dasharray="2 2" d="M1745 250.500H3358"/>');
    barCandles(g, `b282-284-280-290 b268-281-268-284 r268-271-263 r271-277-269 r277-281-277-287 r281-285-278-288 b272-285
r272-285-270 r285-289-278-297 r290-335-289-340 b326-335-313 r325-327-316-339 b318-327-313 b317-325-312 b313-317-306
r313-317-313-320 r317-319-317-324 b317-319-317-324 b315-317-313-321 b315-316-313-321 r315-316-313-321 r315-323-315-339
r323-333-323-335 b324-333 b319-324 r319-327 r327-328-324-331 r328-335-328-337 b330-335-328 b327-330 b321-327-321-337
b309-321-302-327 r309-310-302-313 b308-309-306 r309-317-303 b309-317 r309-313 r312-315 b307-314 r307-314 b305-313
b298-305-295 r298-299-291 b297-299 r297-305 b300-305 b297-300 b294-297-287 b292-294 r292-295 r295-302 b292-302 r292-294
b294-295-290 r294-295-294-299 r295-303 b285-303-278-311 b279-285-272-290 r279-283 r283-289-283-294 r289-290-287-293
b286-290 r286-288 b283-286-281 b275-283-273 b274-275-272 r274-275 b274-277-265 r276-277 b270-276-269 r270-275-265
r275-276-272 b275-276 b270-274-266 r278-283 b277-283 b272-277 r272-278-269 b278-279-276-286 r278-279 r279-280-279-284
b277-279-273 r277-279-276-283 r279-280 b277-279-276-286 r277-278-274 r277-289 r289-290-285-300 r290-291-288-298
r290-305-290-308 b287-305-281 b265-287-258 r265-276-263 r276-285-270-288 b281-285-281-287 b276-281-274 r276-284
b277-284-273 r277-278-273-283 r279-280 r279-280-275 b263-279-260-281 b247-263-245-266 r247-250-245`);
    const line = (c, w, pts) => g.raw(`<polyline fill="none" shape-rendering="auto" stroke="${c}" stroke-width="${w}" points="${pts}"/>`);
    line('#f4eefa', 1.3, '1745,78.700 1856,80 1874,81 2031,82.700 2190,85.300 2415,86.700 2560,88 2840,89.300 3031,90.300 3144,91.700 3208,92.300');
    line('#dcf500', 2, '1745,193.300 1839,193.700 1869,194.700 1888,196 2036,197 2234,199.300 2398,200 2600,200.700 2972,202 3208,203.300');
    line('#f4eefa', 1.3, '1745,308.700 1869,309 1899,310.300 2069,311.300 2212,312.700 2600,313.700 3208,314.300');
    [[1851, 287.7, 13, '63M'], [1893, 326, 14, '62M'], [1921.6, 324.7, 12.5, '52M'], [2699, 276, 14, '55M'], [2784, 277.5, 14, '61M'], [2798, 278.3, 10, '']].forEach(c => {
        g.raw(`<circle shape-rendering="auto" cx="${c[0]}" cy="${c[1]}" r="${c[2]}" fill="rgba(200,30,80,.45)" stroke="#d81f55" stroke-width="1.3"/>`);
        g.raw(`<text x="${c[0] - 1}" y="${c[1] + 4}">${c[3]}</text>`);
    });
    watermark(g, 1758, 459);
    g.done();
}

function drawNp() {
    const g = Layer('np');
    const rgb = { g: '77,190,130', r: '240,95,95', w: '215,215,215' };
    `w4 w9 r-15 r-12 w-6 g3 g1 w-17 g5 w-64 g1 w14 r-8 g7 w2 w-11 w0 g3 g4 r-5 r-3 w-25 r-10 w8 g3 r-6 r-6 r-21 w0 w1 g2 w17
w-1 w-1 w-6 g7 w-1 g2 w5 w0 w4 w31 g8 w-5 w-1 w0 g1 g8 g5 r-21 r0 w5 w-4 w2 w-5 w-3 w10 g32 g3 w-41 w1 w2 w-2 w14 g6 r-4 r-25
r-46 r-7 w12 w-7 r-6 r-3 r-27 r-17 g24 w0 w-10 w1 r-6 g3 w10 r-5 w0 w6 w4 w-10 g14 g19 w-1 w0 g9 w0 w-24 w-4 w-1 r-5 w7 w4
r-2 r-3 g12 g33 r-12`.split(/\s+/).forEach((t, k) => {
        const v = Number(t.slice(1)), h = Math.abs(v);
        const a = t[0] === 'w' ? Math.min(.55, .03 + h * .0085) : t[0] === 'g' ? Math.min(.85, .3 + h * .016) : Math.min(.82, .28 + h * .0115);
        g.rect(Math.round(slotX(k)) - 5, v > 0 ? 538 - v : 537, 11, Math.max(1, h), `rgba(${rgb[t[0]]},${a.toFixed(2)})`);
    });
    g.done();
}

function drawCandlePane(id, data) {
    const g = Layer(id);
    barCandles(g, data);
    g.done();
}

// value[,wick up,wick down] bars around a zero line
function drawBars(id, zero, data) {
    const g = Layer(id);
    data.trim().split(/\s+/).forEach((t, k) => {
        const n = t.split(',').map(Number), v = n[0], c = v > 0 ? BLUE : RED;
        const x = Math.round(slotX(k));
        if (n[1]) g.rect(x, zero - n[1], 1, n[1], c + 'c0');
        if (n[2]) g.rect(x, zero, 1, n[2], c + 'c0');
        g.rect(x - 6, v > 0 ? zero - v : zero, 12, Math.abs(v) || 1, c);
    });
    g.done();
}

function drawLiqs() {
    const g = Layer('liqs');
    const big = { 1: [2, 0], 4: [0, 3], 6: [2, 0], 7: [0, 5], 8: [1, 4], 9: [0, 79], 10: [1, 0], 11: [2, 8], 13: [2, 0], 14: [2, 0], 21: [0, 7],
        22: [1, 7], 27: [0, 1], 30: [1, 1], 31: [7, 0], 34: [0, 4], 41: [3, 0], 42: [3, 0], 47: [3, 0], 50: [0, 2], 55: [0, 9], 56: [20, 1], 57: [6, 0],
        59: [0, 1], 64: [2, 0], 69: [2, 0], 70: [1, 1], 75: [1, 0], 76: [1, 0], 77: [0, 1], 81: [2, 0], 86: [0, 8], 87: [0, 4], 89: [0, 6], 90: [8, 0],
        91: [22, 0], 92: [0, 1], 93: [0, 2], 101: [3, 0], 102: [25, 0] };
    for (let k = 0; k < 103; k++) {
        const x = Math.round(slotX(k)) - 5, v = big[k];
        if (!v && [19, 20, 37, 39, 44, 48, 54, 67, 68, 72, 73, 80, 82, 84, 88, 94, 99, 100].includes(k)) continue;
        g.rect(x, 1291, 11, 1, k % 3 ? '#27376d' : '#6b1c3b');
        if (!v) continue;
        if (v[0]) g.rect(x, 1291 - v[0], 11, v[0], BLUE);
        if (v[1]) g.rect(x, 1291, 11, v[1], RED);
    }
    g.done();
}

function drawAxis(id, x, labels, tags) {
    const g = Layer(id);
    labels.forEach(l => g.raw(`<text x="${x + 6}" y="${l[0] + 4.3}">${l[1]}</text>`));
    tags.forEach(t => {
        g.rect(x, t[0], t[1], 20, t[2]);
        g.raw(`<text x="${x + 4.5}" y="${t[0] + 14.3}" style="fill:${t[3]}">${t[4]}</text>`);
    });
    g.done();
}

drawPrice();
series('cvd', cvdPath, 3, 2).draw();
series('cvdspot', spotPath, 7, 8).draw();
series('oi', oiPath, 5, 12).draw();
drawLiqMap();
drawNp();

drawCandlePane('nl', `w629-630 w629-630-620 b629-630 b628-629 w628-632 b630-631 b630-631-626 w630-641 b640-641 w640-680-640-692
b679-680-673 w679-688-679-694 b667-688-665 b663-667-661 w663-666-662 w666-673-666-676 w673-674 b669-673 b666-669 b664-666 b663-664
w663-678-663-689 b677-678-677-687 w677-678 b676-678-675 b675-676-675-680 b675-676-675-681 b674-675 w674-675-672 w674-675
b672-674-670 w672-674-660 w674-678 w678-679-674 w678-686-678-688 b682-687 w682-683 b683-684 w683-684 w683-686 w686-687
w686-690-684 b689-690 w689-690 w689-690-689-692 w690-691 b686-690 b681-686 b678-681 b677-678 b676-677-676-687 w676-677-673
w677-683 w683-684 w684-686-684-690 w686-688-686-697 w688-689-680-691 b669-689 b669-670-669-672 w669-693 w693-694-693-696
w694-695-693 w695-698 w698-699 b696-699 b689-696 b687-689 b686-687 b685-686 w685-686 w686-697 b696-697-696-699 b695-696-692
b694-695 b692-694-692-696 b677-692 w677-678-669 w677-684 w684-685 b683-684 b682-683 w683-684 b683-684 w683-685 w685-686
w685-688-685-690 w688-694-688-698 b692-694-692-697 b691-692 w691-692-691-697 w692-693-688 b686-692-684 w686-687 w687-701-687-707
w701-702 w702-703 b702-703 w702-703-699 w702-704 b704-705 b704-705-704-707 b694-704 b673-694 b672-674`);

drawCandlePane('ns', `w801-803-801-805 w803-808-803-810 r795-808-792 r788-795 w788-789-784 r781-788 r781-782 w782-783 r776-783-771
w776-781-763-783 r781-782 w781-782 r779-781 r779-780 w779-807-779-809 w807-808 w808-809-805 r808-809 r807-808 r807-808 r804-807
w804-806 r799-806-799-808 w799-807 r807-808 r802-807 r798-802 r786-798 w786-787-786-789 w786-787-786-790 r787-788-787-791
w787-797-787-799 w797-798-794 w797-798 w798-799 r798-799 w798-799 r797-799 w797-800 w800-801 w800-802-800-804 w802-820
r815-820-813 w815-819 w819-820-817 w819-820-819-823 r819-820 r819-820-819-823 r818-819 r806-819 r806-807 w806-808 w809-810
w810-811 w810-811 w810-811 w811-817-811-829 r815-817 r813-815-810 w813-816-811 w816-817 w817-818 w818-819 w818-826 r826-827
r825-826 r810-825 r782-810-780 r778-782 w778-785-778-787 w785-786 r780-786 r779-780 r764-780-762 r753-764 r752-753-752-755 w752-753
w752-753 w753-754-753-756 r748-754 r745-748 w745-751 r748-750 w748-749 w748-751 w751-752 w752-753 r743-752 r732-743 w732-733-728
w732-733 r732-733-732-740 w732-733-726 w732-734 w734-738 w738-740-738-742 r738-740 w738-741 w741-742 r740-741 r739-740 r738-739
r736-738 r727-736`);

drawBars('funding', 944, `32 25 13 18 33 37 47 33 19 11 -7 4 36 78 89 95 95 78 75 63 59 46 35 28 31 25 8 -10 1 20 21 19 20 36 67 77
76 82 90 86 82 77 61 56 44 25 33 33 32 34 42 44 45 39 35 30 33 51 63 62 40 15 -2 -6 5 10 24 47 65 66 60 54 48 39 49 61 70 63 56 58
57 55 66 82 83 80 82 88 95 85 84 76 56 46 28 20 4 19 33 47 59 85 93 93`);

drawBars('dvspot', 1025, `17,18,14 11,12,4 -16,9,24 -12,3,13 -25,0,33 -10,2,15 1,13,10 10,26,11 -8,6,20 -54,13,73 27,38,4 1,6,23
3,17,12 12,13,3 10,14,3 -7,1,11 -8,4,15 5,12,6 -2,7,10 7,14,5 1,6,3 -45,13,52 -6,6,11 -1,4,3 10,11,0 18,28,8 6,10,6 2,8,15
-4,15,11 -7,16,21 4,10,15 31,39,2 -13,6,19 -16,2,19 -16,11,20 10,14,3 -6,0,11 -11,0,13 -1,3,4 -4,0,6 4,15,7 11,15,10 10,21,2
10,10,5 -13,0,17 7,8,4 -3,2,7 17,21,2 -1,3,3 -8,9,14 -39,8,41 7,10,10 -2,10,10 3,7,5 3,6,3 -16,0,19 27,29,21 19,27,5 -7,5,14
-15,0,18 1,3,3 3,4,0 -7,0,11 1,5,5 4,7,6 8,10,2 3,14,12 -22,0,22 1,4,3 23,24,2 -2,6,6 -3,0,6 -2,0,4 -13,0,17 -27,0,30 -2,2,9
12,21,2 1,11,8 -3,4,13 -5,2,6 -5,2,8 10,15,3 -6,0,9 -4,0,8 5,5,6 -1,2,3 -13,2,17 -5,4,17 18,21,7 -3,11,16 27,29,4 38,48,8
-13,2,16 -2,21,20 -4,0,9 12,19,3 -3,2,4 6,9,3 -2,0,2 6,9,4 -2,3,4 20,25,5 31,42,12 -5,8,11`);

drawBars('dv', 1169, `2,4,4 17,20,4 -2,11,6 -11,1,13 -6,3,18 2,6,9 16,18,3 -17,7,23 -5,8,17 -68,14,75 26,34,2 3,8,19 -3,21,9
14,14,2 -3,12,6 -6,0,10 -6,0,10 1,2,6 6,7,0 -1,2,5 -4,2,6 -15,10,38 -9,0,12 5,8,2 3,4,3 1,6,9 -4,2,5 -5,4,11 10,11,2 5,6,3
11,12,6 39,47,2 -4,6,9 -3,2,7 -3,9,8 4,5,4 -2,0,6 -2,0,6 5,6,3 -2,0,3 11,12,2 31,31,3 8,11,3 -1,0,4 -9,0,10 1,2,2 3,5,3
20,25,2 2,4,4 -9,0,10 -15,0,19 11,12,2 1,2,5 4,5,2 -5,0,9 -17,0,24 34,42,14 13,24,5 -1,3,8 -15,0,17 -1,1,3 5,5,2 -1,0,3
5,5,2 12,13,2 -2,0,3 -4,0,9 -10,0,11 -2,1,4 13,16,2 -3,11,5 -2,1,5 -2,0,5 -16,0,18 -11,0,19 12,13,4 6,9,2 -17,0,18 1,2,11
-3,0,7 -1,0,4 7,9,2 -5,0,9 1,2,2 2,3,2 2,3,0 -19,0,26 -1,0,16 7,8,4 -13,0,19 18,19,3 35,45,4 -4,4,8 -10,9,16 5,5,3 -3,4,5
-1,1,5 5,11,2 3,4,2 -1,0,3 1,2,2 22,27,3 33,37,6 -6,0,7`);

drawLiqs();

drawAxis('axisleft', 1675, [[120.7, '67000.0'], [182.5, '66000.0'], [307.5, '64000.0'], [368.7, '63000.0'], [431, '62000.0'], [492, '61000.0'],
    [554, '-4B'], [594.5, '-5B'], [636, '-6B'], [678, '-7B'], [719.5, '-8B'], [761, '-9B'],
    [798.5, '-750M'], [839, '-800M'], [880, '-850M'], [920.5, '-900M'], [961, '-950M'], [1002, '-1000M'], [1042.5, '-1.05B'], [1083, '-1.10B'],
    [1110, '16B'], [1166.5, '15.50B'], [1222.5, '15B'], [1278.5, '14.50B'], [1334, '14B']],
    [[194, 57, '#a9b1d6', '#101018', '65650.0'], [232, 57, '#f7768e', '#101018', '65031.7'], [252, 43, '#f7768e', '#101018', '33:17'],
    [287, 57, '#a9b1d6', '#101018', '64155.0'], [402, 57, '#a9b1d6', '#101018', '62270.0']]);

drawAxis('axisright', 3358, [[93.7, '70000.0'], [156.7, '68000.0'], [220.5, '66000.0'], [284, '64000.0'], [347, '62000.0'], [410.5, '60000.0'], [474, '58000.0'],
    [513.7, '500'], [538, '0'], [562.7, '-500'], [587.7, '-1000'],
    [616, '-1.50K'], [633.7, '-2K'], [651, '-2.50K'], [668.7, '-3K'], [686, '-3.50K'], [703.7, '-4K'],
    [725.7, '3.50K'], [742.7, '3K'], [759, '2.50K'], [775.7, '2K'], [791.7, '1.50K'], [807.7, '1000'], [824.7, '500'], [841, '0.0'],
    [867, '0.0'], [893, '0.0'], [919, '0.0'], [945, '0.0'],
    [980.7, '40M'], [1003.7, '20M'], [1048, '-20M'], [1071, '-40M'], [1093, '-60M'],
    [1124.7, '400M'], [1147.7, '200M'], [1192.7, '-200M'], [1214.7, '-400M'], [1237, '-600M'],
    [1260.7, '10000000.0'], [1324, '-10000000.0'], [1355, '-20000000.0']],
    [[240.5, 57, '#f7768e', '#101018', '65031.7'], [260.5, 43, '#f7768e', '#101018', '33:17'], [538.5, 57, '#ff6464', '#101018', '-227.46'],
    [841, 15, BLUE, '#ffffff', '0'], [1020, 30, '#7aa2f7', '#101018', '-4M'], [1165, 37, '#7aa2f7', '#101018', '-53M'],
    [1281, 37, RED, '#101018', '-11K']]);

function times(id, list) {
    document.getElementById(id).innerHTML = list.split(' ').map(t => `<span>${t}</span>`).join('');
}
times('timesleft', '10/06 23:00 11/06 12/06 17:00 13/06 21:00 14/06 15/06 15:00 16/06 18:00 17/06 22:00 18/06 19/06 16:00 20/06 20:00 21/06 23:00 22/06 23/06 17:00 24/06 21:00 25/06 26/06 14:00');
times('timesright', '18/06 12:00 18:00 23:00 19/06 10:00 16:00 21:00 20/06 08:00 14:00 20:00 21/06 07:00 12:00 18:00 23:00 22/06 10:00 16:00');
```
